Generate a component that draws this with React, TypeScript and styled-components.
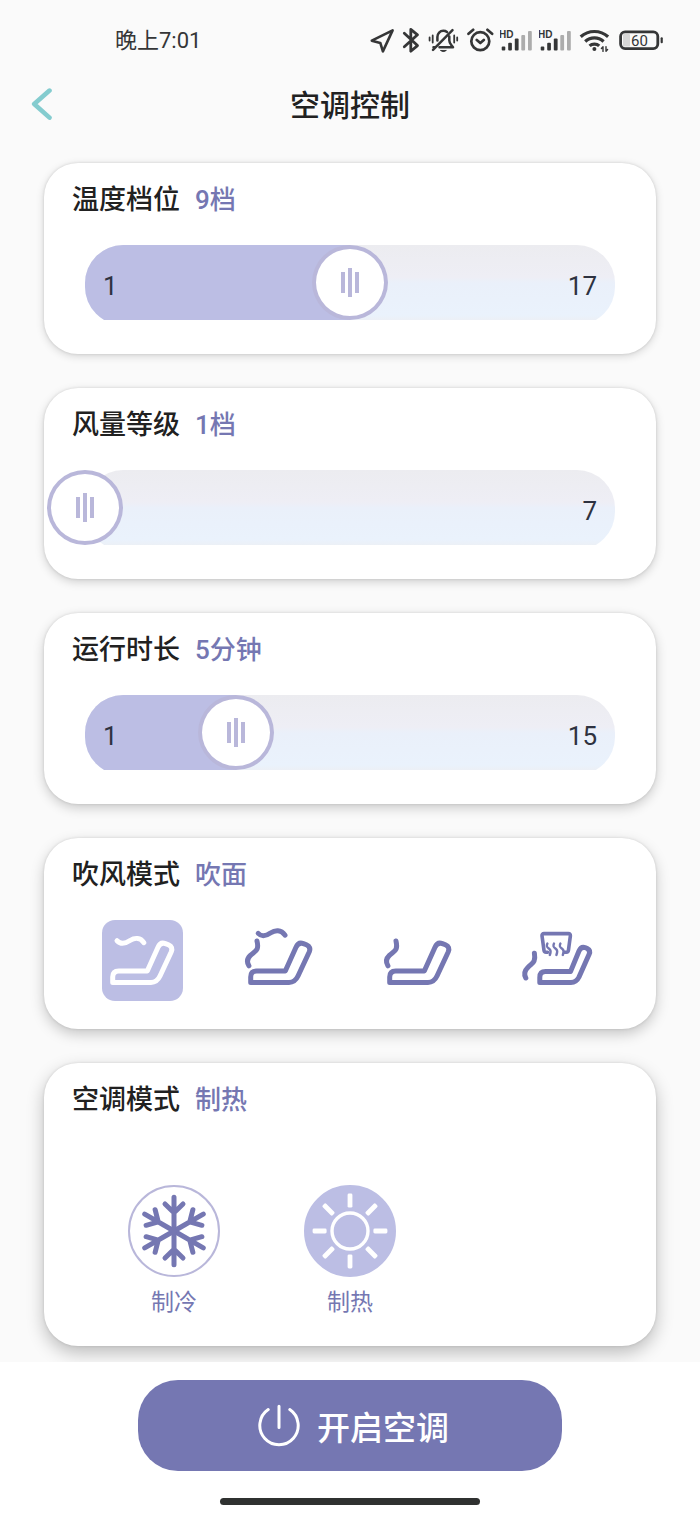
import React, { useState } from 'react';
import styled, { createGlobalStyle } from 'styled-components';

const ink = '#212121';
const statusInk = '#353637';
const accent = '#7577b2';
const soft = '#bcbee4';
const ring = '#b9b7da';

const GlobalStyle = createGlobalStyle`
  *, *::before, *::after { box-sizing: border-box; }
  body {
    margin: 0;
    background: #fff;
    color: ${ink};
    font-family: Roboto, "Noto Sans CJK SC", sans-serif;
  }
  button { font: inherit; border: 0; padding: 0; background: none; cursor: pointer; }
  svg { display: block; }
`;

const Page = styled.div`
  min-height: 100vh;
  display: flex;
  flex-direction: column;
  background: #fafafa;
`;

const StatusBar = styled.div`
  height: 82px;
  padding: 0 37px 0 115px;
  display: flex;
  align-items: center;
  justify-content: space-between;
  color: ${statusInk};
`;

const Clock = styled.time`
  font-size: 22px;
  line-height: 28px;
`;

const StatusIcons = styled.div`
  display: flex;
  gap: 6px;
`;

const Header = styled.header`
  height: 48px;
  padding: 0 30px;
  display: grid;
  grid-template-columns: 1fr auto 1fr;
  align-items: center;
`;

const BackButton = styled.button`
  justify-self: start;
`;

const PageTitle = styled.h1`
  margin: 0;
  font-size: 30px;
  line-height: 48px;
  font-weight: 500;
`;

const Content = styled.main`
  flex: 1;
  display: flex;
  flex-direction: column;
  gap: 34px;
  padding: 33px 44px 16px;
  overflow: hidden;
`;

const Card = styled.section<{ $depth: number }>`
  padding: 21px 0 ${(p) => (p.$depth > 4 ? 28 : 34)}px;
  border-radius: 34px;
  background: #fff;
  box-shadow:
    0 0 3px rgba(0, 0, 0, 0.12),
    0 ${(p) => p.$depth}px ${(p) => p.$depth * 2 + 4}px rgba(0, 0, 0, ${(p) => 0.12 + p.$depth * 0.018});
`;

const CardHeader = styled.div`
  padding: 0 28px;
  display: flex;
  gap: 15px;
  font-size: 27px;
  line-height: 32px;
  font-weight: 500;
`;

const CardTitle = styled.h2`
  margin: 0;
  font: inherit;
`;

const CardValue = styled.output`
  font-size: 26px;
  color: ${accent};
`;

const SliderArea = styled.div`
  display: grid;
  height: 75px;
  margin: 29px 41px 0;
`;

const TrackWindow = styled.div`
  grid-area: 1 / 1;
  height: 75px;
  overflow: hidden;
`;

const Track = styled.div`
  position: relative;
  height: 80px;
  border-radius: 38px;
  overflow: hidden;
  background: linear-gradient(#ececf0, #eeeef5 32px, #eaf0fa 38px, #eaf2fc 70px, #ecf0f6 75px);
`;

const Fill = styled.div`
  position: absolute;
  inset: 0 auto 0 0;
  background: ${soft};
`;

const Bounds = styled.div`
  position: relative;
  height: 82px;
  padding: 0 18px;
  display: flex;
  align-items: center;
  justify-content: space-between;
  font-size: 26px;
  line-height: 32px;
  color: #2e3240;
`;

const bar = `linear-gradient(${ring}, ${ring})`;

const Range = styled.input`
  grid-area: 1 / 1;
  z-index: 1;
  appearance: none;
  width: calc(100% + 76px);
  height: 75px;
  margin: 0 -38px;
  background: transparent;
  cursor: pointer;

  &::-webkit-slider-thumb {
    appearance: none;
    width: 76px;
    height: 75px;
    border: 4px solid ${ring};
    border-radius: 50%;
    background:
      ${bar} 25px 23px / 4px 21px no-repeat,
      ${bar} 32px 19px / 4px 29px no-repeat,
      ${bar} 39px 23px / 4px 21px no-repeat,
      #fff;
  }
`;

const SeatModes = styled.div`
  display: grid;
  grid-template-columns: repeat(4, 1fr);
  justify-items: center;
  margin: 29px 29px 0;
`;

const SeatButton = styled.button<{ $active: boolean }>`
  width: 81px;
  height: 81px;
  border-radius: 13px;
  color: ${(p) => (p.$active ? '#fff' : accent)};
  background: ${(p) => (p.$active ? soft : 'transparent')};
`;

const ClimateModes = styled.div`
  display: grid;
  grid-template-columns: repeat(3, 1fr);
  justify-items: center;
  margin: 69px 42px 0;
`;

const ClimateButton = styled.button`
  display: flex;
  flex-direction: column;
  align-items: center;
  gap: 11px;
  font-size: 23px;
  line-height: 30px;
  color: ${accent};
`;

const ClimateDisc = styled.span<{ $active: boolean }>`
  width: 92px;
  height: 92px;
  display: grid;
  place-items: center;
  border: 2px solid ${(p) => (p.$active ? soft : ring)};
  border-radius: 50%;
  color: ${(p) => (p.$active ? '#fff' : accent)};
  background: ${(p) => (p.$active ? soft : '#fff')};
`;

const Footer = styled.footer`
  padding: 18px 24px 11px;
  display: flex;
  flex-direction: column;
  align-items: center;
  gap: 27px;
  background: #fff;
`;

const PowerButton = styled.button`
  width: 100%;
  max-width: 424px;
  height: 91px;
  padding: 0 0 0 7px;
  display: flex;
  align-items: center;
  justify-content: center;
  gap: 17px;
  border-radius: 40px;
  background: ${accent};
  color: #fff;
  font-family: "Noto Sans CJK SC", sans-serif;
  font-size: 33px;
  line-height: 48px;
  font-weight: 500;
`;

const HomeIndicator = styled.div`
  width: 40%;
  height: 7px;
  border-radius: 4px;
  background: #2f3130;
`;

const Stroke = ({ w, h, sw, children }: { w: number; h: number; sw: number; children: React.ReactNode }) => (
  <svg
    width={w}
    height={h}
    viewBox={`0 0 ${w} ${h}`}
    fill="none"
    stroke="currentColor"
    strokeWidth={sw}
    strokeLinecap="round"
    strokeLinejoin="round"
    aria-hidden="true"
  >
    {children}
  </svg>
);

const Signal = () => (
  <svg width="33" height="28" viewBox="0 0 33 28" fill="currentColor" aria-hidden="true">
    <text x="-1" y="10.5" fontSize="10" fontWeight="700" fontFamily="Liberation Sans, sans-serif">HD</text>
    <rect x="1.7" y="19.5" width="3.6" height="4" rx="1" />
    <rect x="8.2" y="15.7" width="3.7" height="7.8" rx="1" />
    <rect x="14.8" y="11.5" width="3.8" height="12" rx="1" />
    <g fill="#acacac">
      <rect x="21.3" y="8" width="3.8" height="15.5" rx="1" />
      <rect x="28" y="4" width="3.8" height="19.5" rx="1" />
    </g>
  </svg>
);

const StatusGlyphs = () => (
  <StatusIcons>
    <Stroke w={26} h={28} sw={2.6}>
      <path d="M1.8 13.7 22.6 3.4 12.9 24.4 10.3 15.9Z" />
    </Stroke>
    <Stroke w={18} h={28} sw={2.8}>
      <path d="M2.3 6.2 15.5 18.6 8.8 24.2V2.4L15.5 7.8 2.3 19.8" />
    </Stroke>
    <Stroke w={34} h={28} sw={2.5}>
      <path d="M11.4 13.5V10C11.4 6.5 14 3.8 17.3 3.8 18.8 3.8 20 4.2 21 5M23.3 9.5V13.5C23.3 16.3 25 17.5 27 20.3H13.5M7.5 20.3H8.5M7 22.8 26.5 3.2" />
      <path d="M14.8 23.7Q17.4 25.6 20 23.7Z" fill="currentColor" strokeWidth="1" />
      <path d="M3.6 10.5V13.5M6.7 8.5V15.5M28.2 8.5V15.5M31.2 10.5V13.5" strokeWidth="1.8" />
    </Stroke>
    <Stroke w={28} h={28} sw={2.7}>
      <circle cx="14.3" cy="14.2" r="9" />
      <path d="M2.5 6.8 7.2 2.8M21.4 2.8 26.1 6.8M10.8 13 14.3 16 17.8 13" />
    </Stroke>
    <Signal />
    <Signal />
    <Stroke w={33} h={28} sw={3.2}>
      <g strokeLinecap="butt">
        <path d="M2.7 9.8C10.5 2.7 22.3 2.7 30.1 9.8" />
        <path d="M7.2 14.5C12.5 9.6 20.3 9.6 25.6 14.5" />
        <path d="M11.6 18.9C14.2 16.4 18.6 16.4 21.2 18.9" />
      </g>
      <circle cx="16.4" cy="22" r="2" fill="currentColor" stroke="none" />
      <path d="M25 24.4V19.8L23.4 21.4M28 19.6V24.2L29.6 22.6" strokeWidth="1.4" />
    </Stroke>
    <svg width="46" height="28" viewBox="0 0 46 28" aria-hidden="true">
      <rect x="6" y="7" width="7" height="12.5" rx="1" fill="#d6d6d6" />
      <rect x="3.6" y="4.8" width="37.2" height="16.8" rx="4.5" fill="none" stroke="currentColor" strokeWidth="2.8" />
      <rect x="43.6" y="10.2" width="2.2" height="6" rx="1" fill="currentColor" />
      <text x="22.5" y="18.5" textAnchor="middle" fontSize="15" fill="currentColor">60</text>
    </svg>
  </StatusIcons>
);

const SEAT = 'M10.7 62.4V57Q10.7 51 16.7 51H45.3L56 27.2Q58.3 21.8 63.4 23.6L66.4 24.8Q71.4 27 69.2 32L58 56Q55 62.4 49 62.4Z';
const SIDE_FLOW = 'M17 21C19.4 31 15 31 10.4 35.4C7 38.6 6.6 42 8.9 45.8';

const seatModes = [
  {
    name: '吹面',
    icon: (
      <>
        <path d={SEAT} />
        <path d="M15 20.7C19 24.8 24 23.2 28 20.5C33 17.4 38.5 17.6 41.8 22.6" />
      </>
    ),
  },
  {
    name: '吹面吹脚',
    icon: (
      <>
        <path d={SEAT} />
        <path d="M18.2 13.4C21.6 17 26.4 15.8 30.4 13C35 10 41 9.4 45 15.2" />
        <path d={SIDE_FLOW} />
      </>
    ),
  },
  {
    name: '吹脚',
    icon: (
      <>
        <path d={SEAT} />
        <path d={SIDE_FLOW} />
      </>
    ),
  },
  {
    name: '吹脚除霜',
    icon: (
      <>
        <path d="M22.8 62.4V57.4Q22.8 51.6 28.6 51.6H53.5L62 31Q64.2 26 68.6 27.8L70.2 28.5Q74 30.5 72 34.6L62 57Q59.4 62.4 54 62.4Z" />
        <path d="M17.4 33.2C19 43 15 43 10.8 47.6C7.4 51 6.8 54.4 8.8 58" />
        <path d="M30.6 32.2H29Q27.2 32.2 27 30.4L25 15.8Q24.9 13.6 27 13.6H51.4Q53.5 13.6 53.4 15.8L51.4 30.4Q51.2 32.2 49.4 32.2H47.5" strokeWidth="3.6" />
        <path d="M30.4 23.6C28.6 27.4 31.2 27.6 32.8 29.4C34.4 31 33.6 33 32.8 35M37 23.6C35.2 27.4 37.8 27.6 39.4 29.4C41 31 40.2 33 39.4 35M43.4 23.6C41.6 27.4 44.2 27.6 45.8 29.4C47.4 31 46.6 33 45.8 35" strokeWidth="2.4" />
      </>
    ),
  },
];

const SnowIcon = () => (
  <Stroke w={88} h={88} sw={5}>
    {[0, 60, 120, 180, 240, 300].map((a) => (
      <path key={a} d="M44 44V10.2M35 17 44 25.8 53 17" transform={`rotate(${a} 44 44)`} />
    ))}
  </Stroke>
);

const SunIcon = () => (
  <Stroke w={88} h={88} sw={3.4}>
    <circle cx="44" cy="44" r="18" />
    {[0, 45, 90, 135, 180, 225, 270, 315].map((a) => (
      <rect
        key={a}
        x="41.6"
        y="6.6"
        width="4.8"
        height="14"
        rx="1.4"
        fill="currentColor"
        stroke="none"
        transform={`rotate(${a} 44 44)`}
      />
    ))}
  </Stroke>
);

const climateModes = [
  { name: '制冷', icon: <SnowIcon /> },
  { name: '制热', icon: <SunIcon /> },
];

type SliderCardProps = { title: string; unit: string; max: number; initial: number; depth: number };

const SliderCard = ({ title, unit, max, initial, depth }: SliderCardProps) => {
  const [value, setValue] = useState(initial);
  return (
    <Card $depth={depth}>
      <CardHeader>
        <CardTitle>{title}</CardTitle>
        <CardValue>{`${value}${unit}`}</CardValue>
      </CardHeader>
      <SliderArea>
        <TrackWindow>
          <Track>
            <Fill style={{ width: `${((value - 1) / (max - 1)) * 100}%` }} />
            <Bounds>
              <span>{value > 1 ? 1 : ''}</span>
              <span>{max}</span>
            </Bounds>
          </Track>
        </TrackWindow>
        <Range
          type="range"
          aria-label={title}
          min={1}
          max={max}
          value={value}
          onChange={(e) => setValue(Number(e.target.value))}
        />
      </SliderArea>
    </Card>
  );
};

export default function App() {
  const [seat, setSeat] = useState('吹面');
  const [climate, setClimate] = useState('制热');

  return (
    <Page>
      <GlobalStyle />
      <StatusBar>
        <Clock>晚上7:01</Clock>
        <StatusGlyphs />
      </StatusBar>
      <Header>
        <BackButton type="button" aria-label="返回">
          <svg width="24" height="36" viewBox="0 0 24 36" fill="none" stroke="#84cccf" strokeWidth="4.6" strokeLinecap="round" strokeLinejoin="round">
            <path d="M19.5 2.6 4.2 16 19.5 29.6" />
          </svg>
        </BackButton>
        <PageTitle>空调控制</PageTitle>
      </Header>
      <Content>
        <SliderCard title="温度档位" unit="档" max={17} initial={9} depth={2} />
        <SliderCard title="风量等级" unit="档" max={7} initial={1} depth={3} />
        <SliderCard title="运行时长" unit="分钟" max={15} initial={5} depth={4} />
        <Card $depth={5}>
          <CardHeader>
            <CardTitle>吹风模式</CardTitle>
            <CardValue>{seat}</CardValue>
          </CardHeader>
          <SeatModes>
            {seatModes.map((m) => (
              <SeatButton
                key={m.name}
                type="button"
                aria-label={m.name}
                aria-pressed={m.name === seat}
                $active={m.name === seat}
                onClick={() => setSeat(m.name)}
              >
                <Stroke w={81} h={81} sw={5}>{m.icon}</Stroke>
              </SeatButton>
            ))}
          </SeatModes>
        </Card>
        <Card $depth={7}>
          <CardHeader>
            <CardTitle>空调模式</CardTitle>
            <CardValue>{climate}</CardValue>
          </CardHeader>
          <ClimateModes>
            {climateModes.map((m) => (
              <ClimateButton
                key={m.name}
                type="button"
                aria-pressed={m.name === climate}
                onClick={() => setClimate(m.name)}
              >
                <ClimateDisc $active={m.name === climate}>{m.icon}</ClimateDisc>
                {m.name}
              </ClimateButton>
            ))}
          </ClimateModes>
        </Card>
      </Content>
      <Footer>
        <PowerButton type="button">
          <Stroke w={42} h={44} sw={3}>
            <path d="M10.2 5.6A19.2 19.2 0 1 0 31.8 5.6M21 2.2V23.4" />
          </Stroke>
          开启空调
        </PowerButton>
        <HomeIndicator />
      </Footer>
    </Page>
  );
}
